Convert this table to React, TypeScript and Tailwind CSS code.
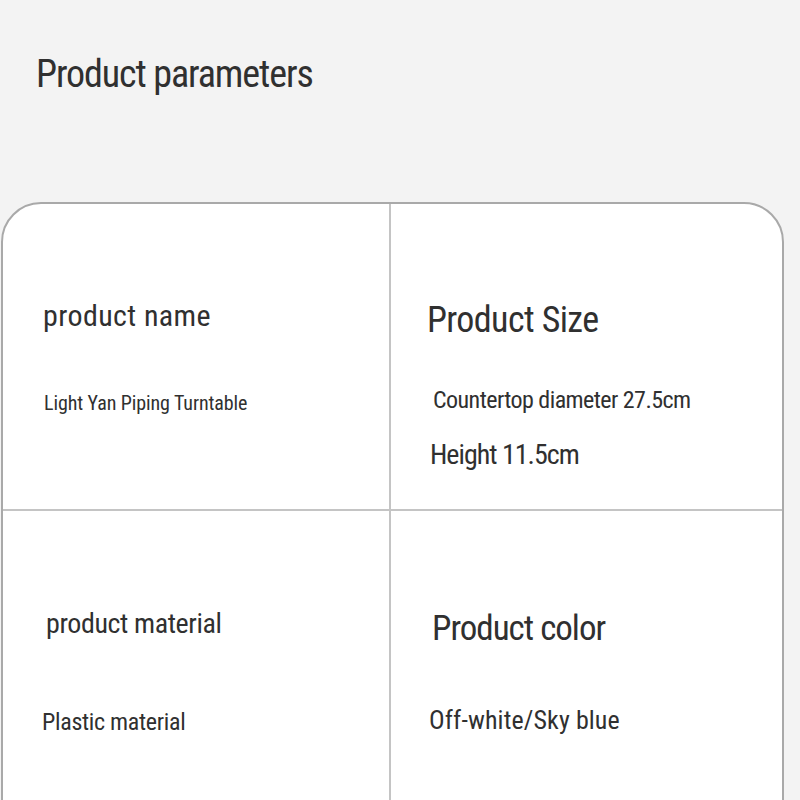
import React from "react";

const font = {
  fontFamily:
    '"Roboto Condensed", "Liberation Sans Narrow", "DejaVu Sans Condensed", "Liberation Sans", sans-serif',
};

export default function App() {
  return (
    <div className="w-[800px] h-[800px] overflow-hidden bg-[#f3f3f3] text-[#303030]" style={font}>
      {/* Title */}
      <div className="h-[202px] pt-[52px] pl-[36px]">
        <h1 className="text-[38px] leading-[44px] font-normal tracking-[-1.1px]">Product parameters</h1>
      </div>

      {/* Card */}
      <div className="ml-[1px] w-[783px] h-[640px] bg-white border-2 border-[#a9a9a9] rounded-[40px] grid grid-cols-[388px_1fr] grid-rows-[307px_1fr]">
        {/* product name */}
        <div className="border-r-2 border-b-2 border-[#c4c4c4] pl-[40px] pt-[94px]">
          <div className="text-[30px] leading-[36px] tracking-[0.4px]">product name</div>
          <div className="mt-[57px] pl-[1px] text-[20px] leading-[24px] tracking-[-0.1px]">Light Yan Piping Turntable</div>
        </div>

        {/* Product Size */}
        <div className="border-b-2 border-[#c4c4c4] pl-[36px] pt-[96px]">
          <div className="text-[36px] leading-[40px] tracking-[-0.6px]">Product Size</div>
          <div className="mt-[46px] pl-[6px] text-[24px] leading-[28px] tracking-[-0.55px]">Countertop diameter 27.5cm</div>
          <div className="mt-[25px] pl-[3px] text-[28px] leading-[32px] tracking-[-1px]">Height 11.5cm</div>
        </div>

        {/* product material */}
        <div className="border-r-2 border-[#c4c4c4] pl-[43px] pt-[96px]">
          <div className="text-[28px] leading-[34px] tracking-[-0.4px]">product material</div>
          <div className="mt-[67px] -ml-[4px] text-[24px] leading-[28px] tracking-[-0.3px]">Plastic material</div>
        </div>

        {/* Product color */}
        <div className="pl-[41px] pt-[98px]">
          <div className="text-[35px] leading-[40px] tracking-[-1px]">Product color</div>
          <div className="mt-[56px] -ml-[3px] text-[26px] leading-[30px] tracking-[0.1px]">Off-white/Sky blue</div>
        </div>
      </div>
    </div>
  );
}
